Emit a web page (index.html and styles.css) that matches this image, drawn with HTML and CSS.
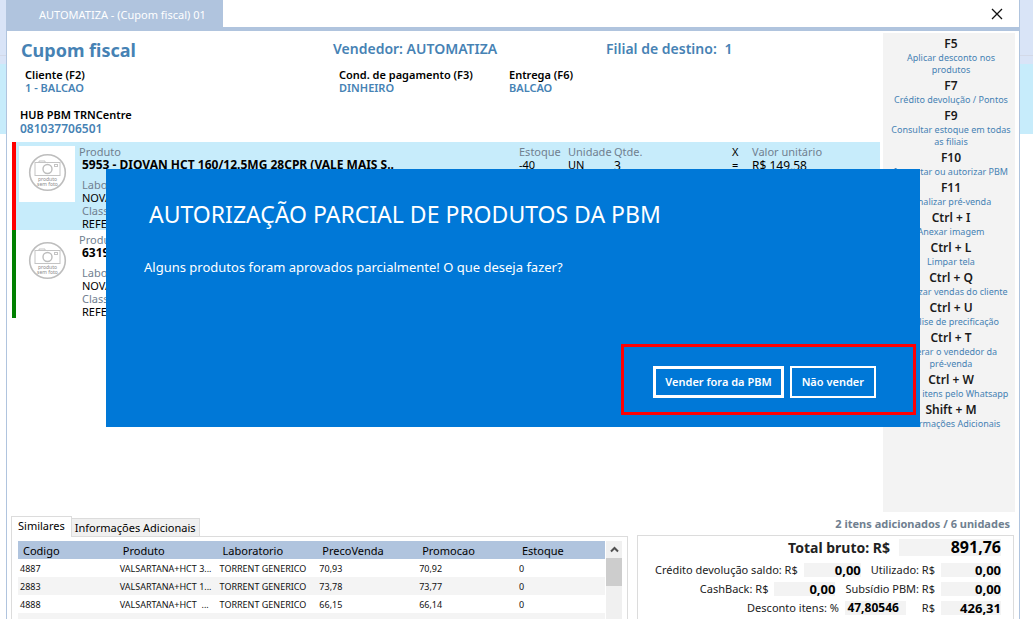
FILE: index.html
```html
<!DOCTYPE html>
<html lang="pt-BR">
<head>
<meta charset="utf-8">
<meta name="viewport" content="width=device-width, initial-scale=1">
<title>AUTOMATIZA - (Cupom fiscal) 01</title>
<link rel="stylesheet" href="styles.css">
</head>
<body>
<div class="window">
  <header class="titlebar">
    <h1 class="window-tab">AUTOMATIZA - (Cupom fiscal) 01</h1>
    <button class="close" type="button" aria-label="Fechar">
      <svg width="12" height="12" viewBox="0 0 12 12"><path d="M1 1l10 10M11 1L1 11" stroke="#111" stroke-width="1.300" fill="none"/></svg>
    </button>
  </header>

  <div class="body">
    <main class="sale">
      <section class="sale-head">
        <h2 class="sale-title">Cupom fiscal</h2>
        <p class="sale-info">Vendedor: AUTOMATIZA</p>
        <p class="sale-info">Filial de destino: <span class="branch-no">1</span></p>
      </section>
      <dl class="fields">
        <div><dt>Cliente (F2)</dt><dd>1 - BALCAO</dd></div>
        <div><dt>Cond. de pagamento (F3)</dt><dd>DINHEIRO</dd></div>
        <div><dt>Entrega (F6)</dt><dd>BALCAO</dd></div>
      </dl>
      <dl class="hub">
        <dt>HUB PBM TRNCentre</dt><dd>081037706501</dd>
      </dl>
      <ul class="products">
        <li class="product pending">
          <svg class="photo" viewBox="0 0 56 56">
            <circle cx="28.500" cy="26.500" r="17.800" fill="#fff" stroke="#bdbdbd" stroke-width="1.600"/>
            <rect x="16" y="16.500" width="25" height="13" fill="none" stroke="#c4c4c4"/>
            <path d="M20 16v-1h6v1" fill="none" stroke="#c4c4c4"/>
            <circle cx="28.500" cy="23" r="4.500" fill="#fff" stroke="#bdbdbd" stroke-width="1.400"/>
            <rect x="35.500" y="18.500" width="3" height="2" fill="none" stroke="#c4c4c4"/>
            <text x="28.500" y="35" text-anchor="middle">produto</text>
            <text x="28.500" y="40" text-anchor="middle">sem foto</text>
          </svg>
          <dl class="main-info">
            <dt>Produto</dt><dd class="name">5953 - DIOVAN HCT 160/12.5MG 28CPR (VALE MAIS S..</dd>
            <dt class="sub">Laboratório</dt><dd>NOVARTIS</dd>
            <dt class="sub">Classificação</dt><dd>REFERENCIA</dd>
          </dl>
          <dl class="amounts">
            <div><dt>Estoque</dt><dd>-40</dd></div>
            <div><dt>Unidade</dt><dd>UN</dd></div>
            <div><dt>Qtde.</dt><dd class="large">3</dd></div>
            <div><dt class="dark">X</dt><dd>=</dd></div>
            <div><dt>Valor unitário</dt><dd class="large">R$ 149,58</dd></div>
          </dl>
        </li>
        <li class="product approved">
          <svg class="photo" viewBox="0 0 56 56">
            <circle cx="28.500" cy="26.500" r="17.800" fill="#fff" stroke="#bdbdbd" stroke-width="1.600"/>
            <rect x="16" y="16.500" width="25" height="13" fill="none" stroke="#c4c4c4"/>
            <path d="M20 16v-1h6v1" fill="none" stroke="#c4c4c4"/>
            <circle cx="28.500" cy="23" r="4.500" fill="#fff" stroke="#bdbdbd" stroke-width="1.400"/>
            <rect x="35.500" y="18.500" width="3" height="2" fill="none" stroke="#c4c4c4"/>
            <text x="28.500" y="35" text-anchor="middle">produto</text>
            <text x="28.500" y="40" text-anchor="middle">sem foto</text>
          </svg>
          <dl class="main-info">
            <dt>Produto</dt><dd class="name">6319</dd>
            <dt class="sub">Laboratório</dt><dd>NOVARTIS</dd>
            <dt class="sub">Classificação</dt><dd>REFERENCIA</dd>
          </dl>
        </li>
      </ul>
    </main>

    <aside class="shortcuts">
      <dl>
        <dt>F5</dt><dd>Aplicar desconto nos produtos</dd>
        <dt>F7</dt><dd>Crédito devolução / Pontos</dd>
        <dt>F9</dt><dd>Consultar estoque em todas as filiais</dd>
        <dt>F10</dt><dd>Importar ou autorizar PBM</dd>
        <dt>F11</dt><dd>Finalizar pré-venda</dd>
        <dt>Ctrl + I</dt><dd>Anexar imagem</dd>
        <dt>Ctrl + L</dt><dd>Limpar tela</dd>
        <dt>Ctrl + Q</dt><dd>Localizar vendas do cliente</dd>
        <dt>Ctrl + U</dt><dd>Análise de precificação</dd>
        <dt>Ctrl + T</dt><dd>Alterar o vendedor da<br>pré-venda</dd>
        <dt>Ctrl + W</dt><dd>Enviar itens pelo Whatsapp</dd>
        <dt>Shift + M</dt><dd>Informações Adicionais</dd>
      </dl>
    </aside>
  </div>

  <footer class="bottom">
    <section class="similar">
      <div class="tabs" role="tablist">
        <button class="tab selected" type="button" role="tab" aria-selected="true">Similares</button>
        <button class="tab" type="button" role="tab" aria-selected="false">Informações Adicionais</button>
      </div>
      <div class="tab-panel">
        <table class="grid">
          <thead><tr><th>Codigo</th><th>Produto</th><th>Laboratorio</th><th>PrecoVenda</th><th>Promocao</th><th>Estoque</th></tr></thead>
          <tbody>
            <tr><td>4887</td><td>VALSARTANA+HCT 3...</td><td>TORRENT GENERICO</td><td>70,93</td><td>70,92</td><td>0</td></tr>
            <tr><td>2883</td><td>VALSARTANA+HCT 1...</td><td>TORRENT GENERICO</td><td>73,78</td><td>73,77</td><td>0</td></tr>
            <tr><td>4888</td><td>VALSARTANA+HCT &nbsp;...</td><td>TORRENT GENERICO</td><td>66,15</td><td>66,14</td><td>0</td></tr>
            <tr><td></td><td></td><td></td><td></td><td></td><td></td></tr>
          </tbody>
        </table>
        <div class="scrollbar">
          <button class="scroll-up" type="button" aria-label="Rolar para cima"><svg width="9" height="7" viewBox="0 0 9 7"><path d="M1 5.500l3.500-3.500 3.500 3.500" fill="none" stroke="#505050" stroke-width="2"/></svg></button>
          <div class="thumb"></div>
        </div>
      </div>
    </section>
    <section class="summary">
      <p class="count">2 itens adicionados / 6 unidades</p>
      <div class="totals">
        <div class="line gross"><span class="label">Total bruto: R$</span><output class="value">891,76</output></div>
        <div class="line"><span class="label">Crédito devolução saldo: R$</span><output class="value credit">0,00</output><span class="label">Utilizado: R$</span><output class="value">0,00</output></div>
        <div class="line"><span class="label">CashBack: R$</span><output class="value cash">0,00</output><span class="label">Subsídio PBM: R$</span><output class="value">0,00</output></div>
        <div class="line"><span class="label">Desconto itens: %</span><output class="value rate">47,80546</output><span class="label">R$</span><output class="value">426,31</output></div>
      </div>
    </section>
  </footer>
</div>

<div class="dialog" role="dialog" aria-modal="true" aria-labelledby="dialog-title">
  <h2 class="dialog-title" id="dialog-title">AUTORIZAÇÃO PARCIAL DE PRODUTOS DA PBM</h2>
  <p class="dialog-text">Alguns produtos foram aprovados parcialmente! O que deseja fazer?</p>
  <div class="dialog-actions">
    <button class="action primary" type="button">Vender fora da PBM</button>
    <button class="action" type="button">Não vender</button>
  </div>
</div>
</body>
</html>
```
FILE: styles.css
```css
* { box-sizing: border-box; }
html { height: 100%; }
body {
  margin: 0;
  height: 100%;
  padding: 0 13px 0 6px;
  overflow: hidden;
  position: relative;
  font: 11px/14px "Noto Sans", "Open Sans", sans-serif;
  color: #000;
  background: linear-gradient(#d9e4f7 0 55px, #d3d9e8 55px 56px, #d9e4f7 56px 64px, #c7ecfb 64px 134px, #fff 134px);
}
h1, h2, p, dl, dd, ul { margin: 0; padding: 0; }
ul { list-style: none; }
button { font: inherit; color: inherit; margin: 0; padding: 0; border: 0; background: none; }

.window {
  height: 100%;
  display: flex;
  flex-direction: column;
  background: #fff;
  border: solid #b0c4de;
  border-width: 0 1px;
}
.titlebar {
  display: flex;
  justify-content: space-between;
  border-bottom: 4px solid #b0c4de;
}
.window-tab {
  width: 216px;
  padding: 5px 0 2px 32px;
  font-size: 11px;
  line-height: 20px;
  font-weight: 400;
  color: #fff;
  background: #b0c4de;
  white-space: nowrap;
}
.close { width: 44px; display: grid; place-items: center; }

.body { flex: 1; min-height: 0; display: flex; gap: 3px; padding: 2px 4px 0 5px; }
.sale { flex: 1; min-width: 0; }
.sale-head {
  display: grid;
  grid-template-columns: 312px 273px 1fr;
  padding: 5px 0 0 9px;
  color: #4682b4;
}
.sale-title { font-size: 18px; line-height: 24px; }
.sale-info { font-size: 14px; line-height: 21px; font-weight: 600; }
.branch-no { margin-left: 4px; }
.fields { display: grid; grid-template-columns: 314px 170px 1fr; padding: 6px 0 0 13px; }
.fields dt, .hub dt { font-weight: 600; line-height: 13px; }
.fields dd, .hub dd { font-weight: 600; line-height: 13px; color: #4682b4; }
.hub { padding: 14px 0 0 8px; }
.hub dd { font-size: 12px; line-height: 16px; }
.products { padding-top: 5px; }
.product {
  display: flex;
  height: 88px;
  padding: 3px 0 0 3px;
  border-left: 4px solid green;
}
.product.pending { border-left-color: red; background: #c7ecfb; }
.photo { width: 56px; height: 56px; margin-top: 1px; background: #fff; flex: none; }
.photo text { font-size: 5px; line-height: 5px; fill: #8c8c8c; }
.main-info { width: 444px; padding-left: 4px; line-height: 13px; white-space: nowrap; overflow: hidden; }
.main-info dt, .amounts dt { color: #708090; line-height: 13px; }
.main-info dd, .main-info dt.sub { padding-left: 3px; }
.main-info dd.name { font-size: 12px; line-height: 14px; font-weight: 700; padding-bottom: 6px; }
.amounts { display: grid; grid-template-columns: 49px 46px 118px 20px 1fr; flex: 1; line-height: 13px; white-space: nowrap; }
.amounts dt.dark { color: #000; }
.amounts dd.large { font-size: 12px; line-height: 16px; }

.shortcuts { width: 132px; background: #f3f3f3; text-align: center; padding: 3px 2px 3px 6px; overflow: hidden; }
.shortcuts dt { font-size: 12px; line-height: 16px; font-weight: 600; color: #1a1a1a; }
.shortcuts dd { font-size: 9px; line-height: 12px; color: #4682b4; margin: 0 0 2px; }

.bottom { flex: 0 0 107px; display: flex; gap: 9px; padding: 0 5px 0 4px; overflow: hidden; }
.similar { flex: 1; min-width: 0; display: flex; flex-direction: column; padding-top: 4px; }
.tabs { display: flex; align-items: flex-end; height: 20px; }
.tab { height: 18px; padding: 0 3px; background: #f0f0f0; border: solid #dcdcdc; border-width: 1px 1px 0; }
.tab.selected { position: relative; z-index: 1; height: 21px; margin-bottom: -1px; padding: 0 6px 2px; background: #fff; }
.tab + .tab { border-left: 0; }
.tab-panel { flex: 1; display: flex; padding: 4px 5px 0 6px; border: solid #dcdcdc; border-width: 1px 1px 0; overflow: hidden; align-items: flex-start; }
.grid { flex: 1; min-width: 0; border-collapse: collapse; table-layout: fixed; }
.grid th { width: 17%; height: 18px; padding: 2px 0 0 5px; font-weight: 400; text-align: left; background: #b0c4de; line-height: 16px; }
.grid th:last-child { width: 15%; }
.grid td { height: 18px; padding: 2px 0 0 2px; font-size: 9px; line-height: 16px; white-space: nowrap; overflow: hidden; color: #111; }
.grid tr:nth-child(even) td { background: #f4f4f4; }
.scrollbar { width: 16px; margin-left: 1px; align-self: stretch; background: #f0f0f0; }
.scroll-up { display: grid; place-items: center; width: 100%; height: 17px; }
.thumb { height: 28px; background: #cdcdcd; }

.summary { width: 377px; }
.count { padding: 4px 4px 3px 0; text-align: right; color: #708090; font-weight: 700; line-height: 16px; }
.totals { border: 1px solid #dcdcdc; padding: 1px 12px 0 0; height: 100px; }
.line { display: flex; justify-content: flex-end; align-items: center; height: 19px; line-height: 14px; }
.label { margin-right: 6px; color: #222; }
.value { width: 60px; height: 14px; font-size: 13px; font-weight: 700; text-align: right; background: #f3f3f3; }
.gross { height: 23px; padding-bottom: 2px; font-size: 14px; font-weight: 700; }
.gross .label { margin-right: 9px; }
.gross .value { width: 102px; height: 17px; font-size: 16px; line-height: 17px; }
.credit { width: 57px; margin-right: 10px; }
.cash { width: 61px; margin-right: 10px; }
.rate { width: 61px; margin-right: 16px; padding-right: 7px; font-size: 12px; }

.dialog {
  position: absolute;
  left: 106px;
  right: 113px;
  top: 169px;
  display: flex;
  flex-direction: column;
  padding: 28px 4px 12px 38px;
  color: #fff;
  background: #0078d7;
}
.dialog-title { padding-left: 5px; font-size: 23px; line-height: 34px; font-weight: 400; }
.dialog-text { padding: 27px 0 68px; font-size: 13px; line-height: 18px; }
.dialog-actions {
  align-self: flex-end;
  display: flex;
  align-items: center;
  gap: 6px;
  padding: 19px 37px 14px 29px;
  border: 3px solid red;
}
.action { height: 32px; padding: 0 10px; border: 2px solid #fff; font-weight: 600; }
.action.primary { padding: 0 9px; border-width: 3px; }
```
